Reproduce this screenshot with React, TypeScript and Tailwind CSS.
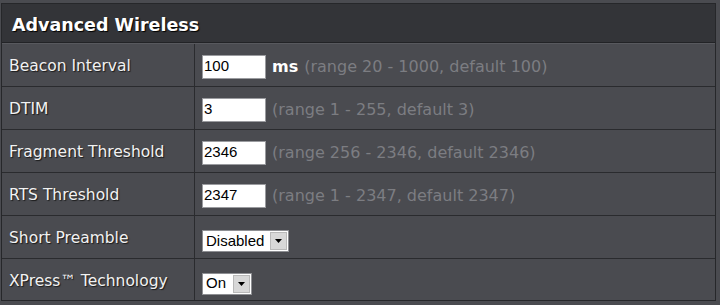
import React from "react";

const rows: { label: string; value: string; unit?: string; hint: string }[] = [
  { label: "Beacon Interval", value: "100", unit: "ms", hint: "(range 20 - 1000, default 100)" },
  { label: "DTIM", value: "3", hint: "(range 1 - 255, default 3)" },
  { label: "Fragment Threshold", value: "2346", hint: "(range 256 - 2346, default 2346)" },
  { label: "RTS Threshold", value: "2347", hint: "(range 1 - 2347, default 2347)" },
];

function Select({ value, width }: { value: string; width: string }) {
  return (
    <div className={`flex h-[22px] items-stretch border border-[#8e8f93] bg-white ${width}`}>
      <div className="flex flex-1 items-center pl-[3px] text-[15px] text-black [font-family:'Liberation_Sans',Arial,sans-serif]">
        {value}
      </div>
      <div className="m-[1px] flex w-[17px] items-center justify-center border border-[#b9b9b9] bg-[#d8d8d8]">
        <svg width="7" height="4" viewBox="0 0 7 4">
          <polygon points="0,0 7,0 3.5,4" fill="#000" />
        </svg>
      </div>
    </div>
  );
}

export default function App() {
  const label =
    "flex w-[193px] items-center border-r border-[#2a2b2e] pl-[7px] pt-[4px] text-[15.5px] text-[#f2f2f2] [text-shadow:1px_1px_1px_#1a1a1a]";
  return (
    <div className="h-[305px] w-[720px] bg-[#4a4b50] pl-[1px] pt-[3px] [font-family:'DejaVu_Sans',Verdana,sans-serif]">
      <div className="w-[715px] border border-[#26272a] bg-[#4a4b50]">
        <div className="flex h-[39px] items-center border-b border-[#222326] bg-[#333438] pl-[10px] pt-[4px] text-[17.5px] font-bold text-white [text-shadow:1px_1px_1px_#000]">
          Advanced Wireless
        </div>
        <div className="border-t border-[#58595e]">
          {rows.map((r) => (
            <div key={r.label} className="flex h-[43px] border-b border-[#2a2b2e]">
              <div className={label}>{r.label}</div>
              <div className="flex flex-1 items-center gap-[6px] pl-[7px] pt-[3px]">
                <div className="flex h-[24px] w-[64px] items-center border border-[#9a9b9f] bg-white pl-[1px] text-[15px] text-black [font-family:'Liberation_Sans',Arial,sans-serif]">
                  {r.value}
                </div>
                {r.unit && <span className="text-[16px] font-bold text-white">{r.unit}</span>}
                <span className="text-[16px] text-[#7c7d82]">{r.hint}</span>
              </div>
            </div>
          ))}
          <div className="flex h-[43px] border-b border-[#2a2b2e]">
            <div className={label}>Short Preamble</div>
            <div className="flex flex-1 items-center pl-[7px] pt-[8px]">
              <Select value="Disabled" width="w-[87px]" />
            </div>
          </div>
          <div className="flex h-[41px]">
            <div className={label}>XPress™ Technology</div>
            <div className="flex flex-1 items-center pl-[7px] pt-[8px]">
              <Select value="On" width="w-[50px]" />
            </div>
          </div>
        </div>
      </div>
    </div>
  );
}
